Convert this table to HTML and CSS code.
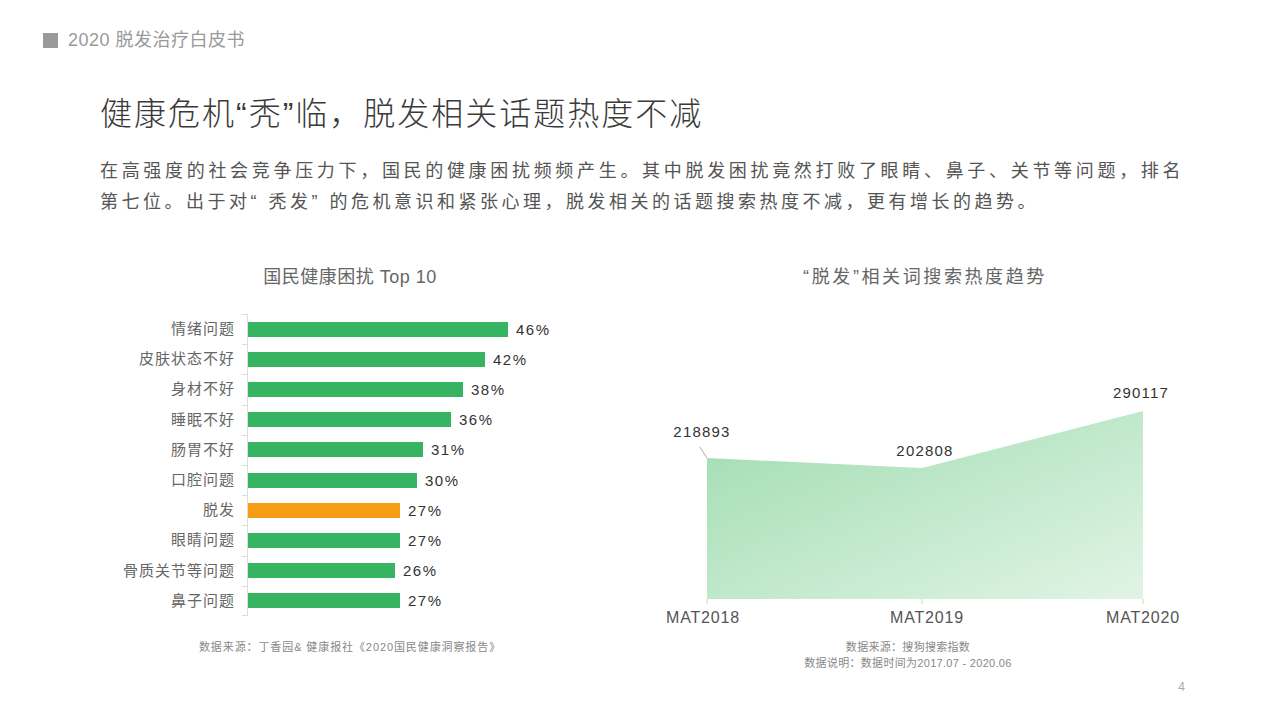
FILE: index.html
```html
<!DOCTYPE html>
<html lang="zh-CN">
<head>
<meta charset="utf-8">
<title>2020 脱发治疗白皮书</title>
<link rel="stylesheet" href="styles.css">
</head>
<body>
<div class="slide">
  <header class="top">
    <span class="mark"></span>
    <span class="brand">2020 脱发治疗白皮书</span>
  </header>

  <h1 class="title">健康危机“秃”临，脱发相关话题热度不减</h1>

  <p class="lead"><span class="line line-full">在高强度的社会竞争压力下，国民的健康困扰频频产生。其中脱发困扰竟然打败了眼睛、鼻子、关节等问题，排名</span><span class="line">第七位。出于对“ 秃发” 的危机意识和紧张心理，脱发相关的话题搜索热度不减，更有增长的趋势。</span></p>

  <section class="charts">
    <div class="chart chart-left">
      <h2 class="chart-title">国民健康困扰 Top 10</h2>
      <div class="bars">
        <div class="row"><span class="label">情绪问题</span><span class="track"><span class="bar" style="width:260px"></span><span class="val">46%</span></span></div>
        <div class="row"><span class="label">皮肤状态不好</span><span class="track"><span class="bar" style="width:237px"></span><span class="val">42%</span></span></div>
        <div class="row"><span class="label">身材不好</span><span class="track"><span class="bar" style="width:215px"></span><span class="val">38%</span></span></div>
        <div class="row"><span class="label">睡眠不好</span><span class="track"><span class="bar" style="width:203px"></span><span class="val">36%</span></span></div>
        <div class="row"><span class="label">肠胃不好</span><span class="track"><span class="bar" style="width:175px"></span><span class="val">31%</span></span></div>
        <div class="row"><span class="label">口腔问题</span><span class="track"><span class="bar" style="width:169px"></span><span class="val">30%</span></span></div>
        <div class="row"><span class="label">脱发</span><span class="track"><span class="bar bar-hl" style="width:152px"></span><span class="val">27%</span></span></div>
        <div class="row"><span class="label">眼睛问题</span><span class="track"><span class="bar" style="width:152px"></span><span class="val">27%</span></span></div>
        <div class="row"><span class="label">骨质关节等问题</span><span class="track"><span class="bar" style="width:147px"></span><span class="val">26%</span></span></div>
        <div class="row"><span class="label">鼻子问题</span><span class="track"><span class="bar" style="width:152px"></span><span class="val">27%</span></span></div>
      </div>
      <p class="source source-left">数据来源：丁香园&amp; 健康报社《2020国民健康洞察报告》</p>
    </div>

    <div class="chart chart-right">
      <h2 class="chart-title chart-title-wide">“脱发”相关词搜索热度趋势</h2>
      <svg class="area" width="536" height="350" viewBox="0 0 536 350">
        <defs>
          <linearGradient id="g" x1="0" y1="0" x2="1" y2="1">
            <stop offset="0" stop-color="#9fdcb0"/>
            <stop offset="1" stop-color="#e1f4e5"/>
          </linearGradient>
        </defs>
        <polygon points="67,169 282,179 503,122 503,310 67,310" fill="url(#g)"/>
        <line x1="67" y1="310" x2="67" y2="315" class="tick"/>
        <line x1="282" y1="310" x2="282" y2="315" class="tick"/>
        <line x1="503" y1="310" x2="503" y2="315" class="tick"/>
        <line x1="60" y1="158" x2="67" y2="169" class="leader"/>
        <text x="62" y="148" class="num">218893</text>
        <text x="285" y="167" class="num">202808</text>
        <text x="501" y="109" class="num">290117</text>
        <text x="63" y="334" class="cat">MAT2018</text>
        <text x="287" y="334" class="cat">MAT2019</text>
        <text x="503" y="334" class="cat">MAT2020</text>
      </svg>
      <p class="source">数据来源：搜狗搜索指数</p>
      <p class="source">数据说明：数据时间为2017.07 - 2020.06</p>
    </div>
  </section>

  <footer class="page">4</footer>
</div>
</body>
</html>
```

FILE: styles.css
```css
* { box-sizing: border-box; }
html, body { margin: 0; padding: 0; background: #fff; }
body {
  font-family: "Liberation Sans", "Noto Sans CJK SC", sans-serif;
  color: #333;
}
.slide {
  width: 1280px;
  height: 720px;
  overflow: hidden;
  position: relative;
  background: #fff;
}
.top {
  display: flex;
  align-items: center;
  gap: 10px;
  height: 22px;
  margin-top: 29px;
  padding-left: 43px;
}
.mark {
  width: 15px;
  height: 15px;
  background: #9a9a9a;
}
.brand {
  font-size: 18px;
  letter-spacing: 0.5px;
  color: #999;
  line-height: 22px;
}
.title {
  margin: 41px 0 0 100px;
  font-size: 32px;
  line-height: 44px;
  font-weight: 300;
  color: #3a3a3a;
  letter-spacing: 2px;
}
.lead {
  margin: 20px 0 0 100px;
  width: 1084px;
  font-size: 18px;
  line-height: 31px;
  letter-spacing: 3.5px;
  color: #555;
  white-space: nowrap;
}
.line { display: block; }
.line-full {
  text-align: justify;
  text-align-last: justify;
  white-space: normal;
}
.charts {
  display: flex;
  margin-top: 47px;
  padding-left: 100px;
  gap: 40px;
}
.chart {
  display: flex;
  flex-direction: column;
  align-items: center;
}
.chart-left { width: 500px; }
.chart-right { width: 536px; }
.chart-title {
  margin: 0;
  font-size: 18px;
  line-height: 24px;
  font-weight: 400;
  letter-spacing: 0.5px;
  color: #666;
}
.chart-title-wide {
  letter-spacing: 2.6px;
  margin-left: 34px;
}
.bars {
  align-self: stretch;
  margin-top: 25px;
  display: flex;
  flex-direction: column;
}
.row {
  display: flex;
  height: 30.2px;
}
.label {
  width: 147px;
  padding-right: 12px;
  text-align: right;
  font-size: 15px;
  letter-spacing: 1px;
  line-height: 30.2px;
  color: #666;
  white-space: nowrap;
}
.track {
  flex: 1;
  display: flex;
  align-items: center;
  border-left: 1px solid #dcdcdc;
  position: relative;
}
.track::before {
  content: "";
  position: absolute;
  left: -6px;
  top: 0;
  width: 5px;
  height: 1px;
  background: #dcdcdc;
}
.row:last-child .track::after {
  content: "";
  position: absolute;
  left: -6px;
  bottom: 0;
  width: 5px;
  height: 1px;
  background: #dcdcdc;
}
.bar {
  height: 15px;
  background: #37b462;
}
.bar-hl { background: #f59d13; }
.val {
  margin-left: 8px;
  font-size: 15px;
  letter-spacing: 1.5px;
  color: #333;
}
.source {
  margin: 0;
  font-size: 11px;
  line-height: 16px;
  color: #888;
  letter-spacing: 0.3px;
}
.source-left {
  margin-top: 23px;
  letter-spacing: 0.9px;
}
.area {
  display: block;
  overflow: visible;
}
.area .tick { stroke: #d0d0d0; stroke-width: 1; }
.area .leader { stroke: #b9a4a4; stroke-width: 1; }
.area .num {
  font-family: "Liberation Sans", sans-serif;
  font-size: 15px;
  letter-spacing: 1.2px;
  fill: #333;
  text-anchor: middle;
}
.area .cat {
  font-family: "Liberation Sans", sans-serif;
  font-size: 16px;
  letter-spacing: 0.8px;
  fill: #555;
  text-anchor: middle;
}
.page {
  position: absolute;
  right: 95px;
  bottom: 26px;
  font-size: 12px;
  color: #aaa;
}
```
